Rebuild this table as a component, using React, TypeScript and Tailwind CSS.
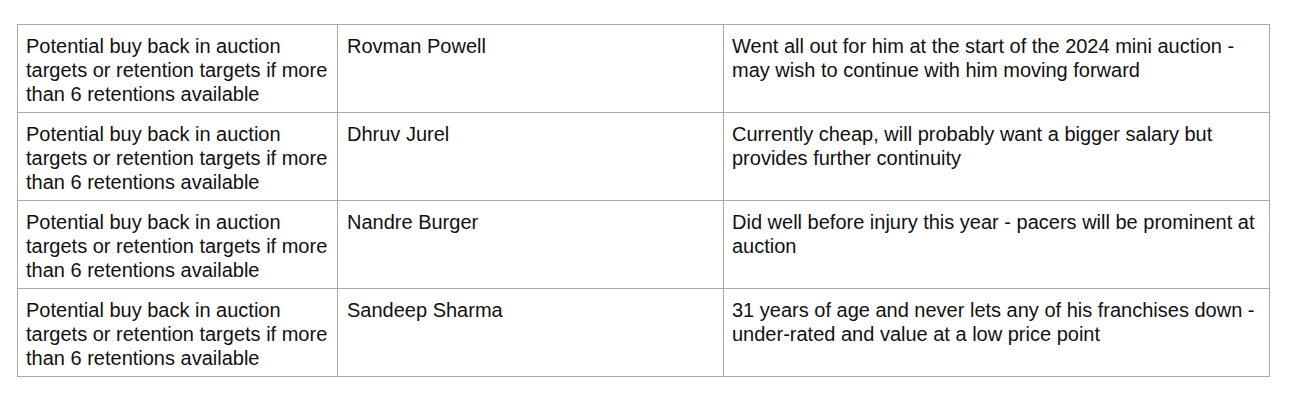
const note = ["Potential buy back in auction", "targets or retention targets if more", "than 6 retentions available"];

const rows = [
  {
    player: "Rovman Powell",
    reason: ["Went all out for him at the start of the 2024 mini auction -", "may wish to continue with him moving forward"],
  },
  {
    player: "Dhruv Jurel",
    reason: ["Currently cheap, will probably want a bigger salary but", "provides further continuity"],
  },
  {
    player: "Nandre Burger",
    reason: ["Did well before injury this year - pacers will be prominent at", "auction"],
  },
  {
    player: "Sandeep Sharma",
    reason: ["31 years of age and never lets any of his franchises down -", "under-rated and value at a low price point"],
  },
];

function Lines({ lines }: { lines: string[] }) {
  return (
    <>
      {lines.map((l) => (
        <div key={l} className="whitespace-nowrap">
          {l}
        </div>
      ))}
    </>
  );
}

export default function App() {
  return (
    <div className="w-[1298px] h-[402px] bg-white pt-[24px] pl-[17px] font-['Liberation_Sans',Arial,sans-serif] text-[20px] leading-[24px] text-[#111]">
      <table className="table-fixed border-collapse w-[1252px]">
        <colgroup>
          <col className="w-[320px]" />
          <col className="w-[386px]" />
          <col className="w-[546px]" />
        </colgroup>
        <tbody>
          {rows.map((r) => (
            <tr key={r.player} className="h-[88px]">
              <td className="border border-[#a9a9a9] align-top pt-[9px] pl-[8px]">
                <Lines lines={note} />
              </td>
              <td className="border border-[#a9a9a9] align-top pt-[9px] pl-[9px]">{r.player}</td>
              <td className="border border-[#a9a9a9] align-top pt-[9px] pl-[8px]">
                <Lines lines={r.reason} />
              </td>
            </tr>
          ))}
        </tbody>
      </table>
    </div>
  );
}
